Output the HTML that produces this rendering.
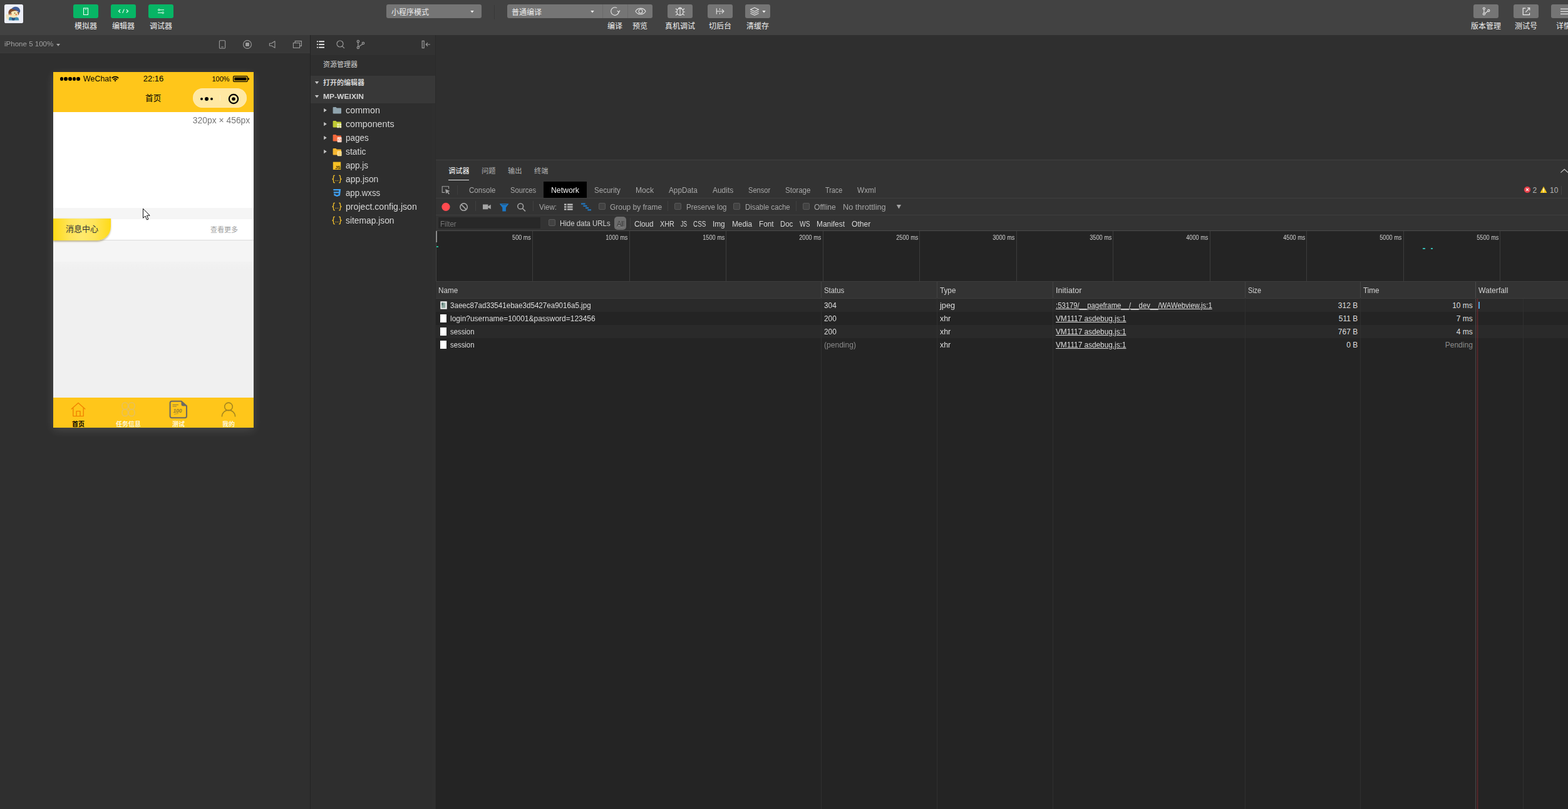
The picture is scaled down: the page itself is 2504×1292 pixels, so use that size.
<!DOCTYPE html>
<html><head><meta charset="utf-8"><title>WeChat DevTools</title><style>
html,body{margin:0;padding:0;}
body{width:2504px;height:1292px;overflow:hidden;background:#2e2e2e;font-family:"Liberation Sans",sans-serif;}
#r{position:relative;width:2504px;height:1292px;overflow:hidden;background:#2e2e2e;}
#r div,#r svg{position:absolute;display:block;}
#r .t{white-space:pre;}
#r u{text-decoration:underline;}
#r svg.cj text{font-family:"Liberation Sans","Noto Sans CJK SC",sans-serif;font-size:1000px;}
</style></head><body><div id="r">
<div style="left:0px;top:0px;width:2504px;height:56px;background:#424242;"></div>
<svg style="left:7px;top:7px;" width="30" height="30" viewBox="0 0 30 30">
<defs><clipPath id="av"><rect width="30" height="30" rx="2.6"/></clipPath>
<filter id="avb" x="-10%" y="-10%" width="120%" height="120%"><feGaussianBlur stdDeviation="0.45"/></filter></defs>
<g clip-path="url(#av)">
<rect x="-1" y="-1" width="32" height="32" fill="#eceef7"/>
<g filter="url(#avb)">
<path d="M7 20.8 C10 19.6 19 19.6 22.4 21.2 L23.4 25.4 H7.2Z" fill="#3f8fb0"/>
<path d="M11.5 20.4 L17.5 20.4 L16 25.4 H12.5Z" fill="#2b4f83"/>
<path d="M2.2 17.4 C2.6 15.4 5 14.8 6.4 16 C7.8 17.4 7.8 21.6 6.8 24.6 C4.6 24.8 2.4 21.6 2.2 17.4Z" fill="#f1e4bf"/>
<ellipse cx="14.8" cy="15.6" rx="7.2" ry="6" fill="#f6e6b6"/>
<path d="M6.6 14.6 C5.6 9 10.4 5.6 16.4 6.2 C19 7 20.6 9 21.4 11 C17.6 9.6 12.6 10.2 9.6 13.6 C8.6 14.8 8.2 16 7.8 17.4 C7.2 16.6 6.8 15.6 6.6 14.6Z" fill="#7f4a2c"/>
<path d="M20 12.4 C21.6 13.4 22.4 15.4 22 17.6 C23.6 15.8 24 13.6 23.4 12Z" fill="#8a5a30"/>
<path d="M11.6 7.4 C13.6 2.6 22.4 2.4 24.8 8.4 C25.6 10.6 25 12.6 23.8 13.6 C21.4 9.8 16.6 7.8 11.6 7.4Z" fill="#3f5b97"/>
<ellipse cx="10.2" cy="16" rx="1.5" ry="1.2" fill="#e2875c"/><ellipse cx="18.9" cy="16.2" rx="1.5" ry="1.2" fill="#e2875c"/>
<ellipse cx="10.3" cy="13.9" rx="0.8" ry="1" fill="#4a2c18"/><ellipse cx="16.6" cy="13.9" rx="0.8" ry="1" fill="#6b6a2a"/>
</g>
</g></svg>
<div style="left:117px;top:7px;width:40px;height:22px;background:#07b565;border-radius:3px;"></div>
<svg class="cj " width="36.00" height="12.00" viewBox="0 0 3000 1000" style="left:119.00px;top:35.12px;"><text x="0" y="880" fill="#f0f0f0">模拟器</text></svg>
<div style="left:177px;top:7px;width:40px;height:22px;background:#07b565;border-radius:3px;"></div>
<svg class="cj " width="36.00" height="12.00" viewBox="0 0 3000 1000" style="left:179.00px;top:35.12px;"><text x="0" y="880" fill="#f0f0f0">编辑器</text></svg>
<div style="left:237px;top:7px;width:40px;height:22px;background:#07b565;border-radius:3px;"></div>
<svg class="cj " width="36.00" height="12.00" viewBox="0 0 3000 1000" style="left:239.00px;top:35.12px;"><text x="0" y="880" fill="#f0f0f0">调试器</text></svg>
<svg style="left:117px;top:7px;" width="40" height="22" viewBox="0 0 40 22"><rect x="16.5" y="6" width="7" height="10.5" fill="none" stroke="#eafff3" stroke-width="1.1"/><line x1="18.6" y1="7.9" x2="21.4" y2="7.9" stroke="#eafff3" stroke-width="0.9"/></svg>
<svg style="left:177px;top:7px;" width="40" height="22" viewBox="0 0 40 22"><g fill="none" stroke="#eafff3" stroke-width="1.15"><path d="M15.2 8.2 L12.4 10.7 L15.2 13.2"/><path d="M24.8 8.2 L27.6 10.7 L24.8 13.2"/><path d="M21.3 7.6 L18.7 13.9"/></g></svg>
<svg style="left:237px;top:7px;" width="40" height="22" viewBox="0 0 40 22"><g fill="none" stroke="#eafff3" stroke-width="1"><circle cx="16.8" cy="8.8" r="1.3"/><line x1="18.2" y1="8.8" x2="25" y2="8.8"/><circle cx="23.2" cy="13.4" r="1.3"/><line x1="15" y1="13.4" x2="21.8" y2="13.4"/></g></svg>
<div style="left:617px;top:7px;width:152px;height:22px;background:#757575;border-radius:3px;"></div>
<svg class="cj " width="60.00" height="12.00" viewBox="0 0 5000 1000" style="left:624.72px;top:12.92px;"><text x="0" y="880" fill="#ececec">小程序模式</text></svg>
<svg style="left:750px;top:16px;" width="8" height="5" viewBox="0 0 8 5"><path d="M1.3 1 L6.7 1 L4 4.4Z" fill="#f0f0f0"/></svg>
<div style="left:789px;top:8px;width:1px;height:23px;background:#383838;"></div>
<div style="left:810px;top:7px;width:232px;height:22px;background:#757575;border-radius:3px;"></div>
<div style="left:962px;top:7px;width:1px;height:22px;background:#6a6a6a;"></div>
<div style="left:1002px;top:7px;width:1px;height:22px;background:#6a6a6a;"></div>
<svg class="cj " width="48.00" height="12.00" viewBox="0 0 4000 1000" style="left:816.82px;top:12.92px;"><text x="0" y="880" fill="#ececec">普通编译</text></svg>
<svg style="left:942px;top:16px;" width="8" height="5" viewBox="0 0 8 5"><path d="M1.3 1 L6.7 1 L4 4.4Z" fill="#f0f0f0"/></svg>
<svg style="left:972px;top:8px;" width="20" height="20" viewBox="0 0 20 20"><g fill="none" stroke="#e6e6e6" stroke-width="1.1"><path d="M13.2 4.6 A6.3 6.3 0 1 0 16.2 10.9"/><path d="M13.6 9.2 L16.2 11.4 L18 8.6"/></g></svg>
<svg style="left:1013px;top:8px;" width="20" height="20" viewBox="0 0 20 20"><g fill="none" stroke="#e6e6e6" stroke-width="1.05"><path d="M2 10 C5 3.8 15 3.8 18 10 C15 16.2 5 16.2 2 10Z"/><circle cx="10" cy="10" r="3"/></g></svg>
<svg class="cj " width="24.00" height="12.00" viewBox="0 0 2000 1000" style="left:970.00px;top:35.12px;"><text x="0" y="880" fill="#f0f0f0">编译</text></svg>
<svg class="cj " width="24.00" height="12.00" viewBox="0 0 2000 1000" style="left:1010.00px;top:35.12px;"><text x="0" y="880" fill="#f0f0f0">预览</text></svg>
<div style="left:1066px;top:7px;width:40px;height:22px;background:#757575;border-radius:3px;"></div>
<svg style="left:1076px;top:8px;" width="20" height="20" viewBox="0 0 20 20"><g fill="none" stroke="#e6e6e6" stroke-width="1.1"><path d="M5 10.4 A5 5 0 0 1 15 10.4 L15 11.4 A5 5 0 0 1 5 11.4Z"/><path d="M7.4 6 A2.7 2.7 0 0 1 12.6 6"/><line x1="10" y1="6" x2="10" y2="16.2"/><path d="M5 11 H2.2 M15 11 H17.8 M5.8 8 L3 5.8 M14.2 8 L17 5.8 M6 14.2 L3 16.4 M14 14.2 L17 16.4"/></g></svg>
<svg class="cj " width="48.00" height="12.00" viewBox="0 0 4000 1000" style="left:1062.00px;top:35.12px;"><text x="0" y="880" fill="#f0f0f0">真机调试</text></svg>
<div style="left:1130px;top:7px;width:40px;height:22px;background:#757575;border-radius:3px;"></div>
<svg style="left:1140px;top:8px;" width="20" height="20" viewBox="0 0 20 20"><g fill="none" stroke="#e6e6e6" stroke-width="1.1"><line x1="4.3" y1="5.2" x2="4.3" y2="14.8"/><path d="M4.3 10 H15.8"/><path d="M9.5 5.2 V7.8 M9.5 12.2 V14.8"/><path d="M12.6 6.6 L16 10 L12.6 13.4"/></g></svg>
<svg class="cj " width="36.00" height="12.00" viewBox="0 0 3000 1000" style="left:1132.00px;top:35.12px;"><text x="0" y="880" fill="#f0f0f0">切后台</text></svg>
<div style="left:1190px;top:7px;width:40px;height:22px;background:#757575;border-radius:3px;"></div>
<svg style="left:1195px;top:8px;" width="20" height="20" viewBox="0 0 20 20"><g fill="none" stroke="#e6e6e6" stroke-width="1.1" stroke-linejoin="round"><path d="M10 4.2 L16.6 7.2 L10 10.2 L3.4 7.2Z"/><path d="M3.4 10.2 L10 13.2 L16.6 10.2"/><path d="M3.4 13.2 L10 16.2 L16.6 13.2"/></g></svg>
<svg style="left:1216px;top:16px;" width="8" height="5" viewBox="0 0 8 5"><path d="M1.3 1 L6.7 1 L4 4.4Z" fill="#f0f0f0"/></svg>
<svg class="cj " width="36.00" height="12.00" viewBox="0 0 3000 1000" style="left:1192.00px;top:35.12px;"><text x="0" y="880" fill="#f0f0f0">清缓存</text></svg>
<div style="left:2353px;top:7px;width:40px;height:22px;background:#757575;border-radius:3px;"></div>
<svg style="left:2363px;top:8px;" width="20" height="20" viewBox="0 0 20 20"><g fill="none" stroke="#ececec" stroke-width="1.1"><circle cx="6.9" cy="5.6" r="1.6"/><circle cx="6.9" cy="14.4" r="1.6"/><circle cx="14.3" cy="9" r="1.6"/><line x1="6.9" y1="7.2" x2="6.9" y2="12.8"/><line x1="8.3" y1="13.5" x2="12.9" y2="9.9"/></g></svg>
<svg class="cj " width="48.00" height="12.00" viewBox="0 0 4000 1000" style="left:2349.00px;top:35.12px;"><text x="0" y="880" fill="#f0f0f0">版本管理</text></svg>
<div style="left:2417px;top:7px;width:40px;height:22px;background:#757575;border-radius:3px;"></div>
<svg style="left:2427px;top:8px;" width="20" height="20" viewBox="0 0 20 20"><g fill="none" stroke="#ececec" stroke-width="1.2"><path d="M9.4 5.2 H5.2 V15.6 H15.6 V12.6"/><path d="M12.2 4.6 H15.8 V8.4"/><line x1="15.6" y1="4.9" x2="9.4" y2="11.4"/></g></svg>
<svg class="cj " width="36.00" height="12.00" viewBox="0 0 3000 1000" style="left:2419.00px;top:35.12px;"><text x="0" y="880" fill="#f0f0f0">测试号</text></svg>
<div style="left:2477px;top:7px;width:40px;height:22px;background:#757575;border-radius:3px;"></div>
<svg style="left:2487px;top:8px;" width="20" height="20" viewBox="0 0 20 20"><g stroke="#ececec" stroke-width="1.2"><line x1="5" y1="6.3" x2="17" y2="6.3"/><line x1="5" y1="10.3" x2="17" y2="10.3"/><line x1="5" y1="14.3" x2="17" y2="14.3"/></g></svg>
<svg class="cj " width="24.00" height="12.00" viewBox="0 0 2000 1000" style="left:2485.00px;top:35.12px;"><text x="0" y="880" fill="#f0f0f0">详情</text></svg>
<div style="left:0px;top:56px;width:495px;height:1236px;background:#2f2f2f;"></div>
<div style="left:0px;top:56px;width:495px;height:29px;background:#383838;"></div>
<div style="left:0px;top:84px;width:495px;height:1px;background:#3c3c3c;"></div>
<div class="t" style="top:64.97px;font-size:11.5px;line-height:11.5px;color:#a0a0a0;left:7.4px;transform:scaleX(1.0036);transform-origin:0 0;">iPhone 5 100%</div>
<svg style="left:89px;top:69px;" width="8" height="6" viewBox="0 0 8 6"><path d="M1 1 L7 1 L4 4.8Z" fill="#a8a8a8"/></svg>
<svg style="left:348px;top:63px;" width="14" height="16" viewBox="0 0 14 16"><rect x="2.4" y="1.8" width="9.2" height="12.4" rx="1.2" fill="none" stroke="#9a9a9a" stroke-width="1.1"/><line x1="5.2" y1="12" x2="8.8" y2="12" stroke="#9a9a9a" stroke-width="1"/></svg>
<svg style="left:386px;top:62px;" width="18" height="18" viewBox="0 0 18 18"><circle cx="9" cy="9" r="6.4" fill="none" stroke="#9a9a9a" stroke-width="1.1"/><rect x="6" y="6" width="6" height="6" rx="1" fill="#9a9a9a"/></svg>
<svg style="left:427px;top:63px;" width="16" height="16" viewBox="0 0 16 16"><path d="M3.4 6.2 L6.6 6.2 L12 2.8 L12 13.4 L6.6 10 L3.4 10Z" fill="none" stroke="#9a9a9a" stroke-width="1.1" stroke-linejoin="round"/></svg>
<svg style="left:466px;top:63px;" width="18" height="16" viewBox="0 0 18 16"><g fill="none" stroke="#9a9a9a" stroke-width="1.1"><path d="M5.2 5.4 V2.6 H15.4 V10.4 H12.6"/><rect x="2.4" y="5.6" width="10.2" height="7.8"/></g></svg>
<div style="left:85px;top:115px;width:320px;height:568px;background:#f0f0f0;box-shadow:0 4px 14px rgba(255,255,255,0.13);"></div>
<div style="left:85px;top:115px;width:320px;height:64px;background:#ffc61a;"></div>
<div style="left:95.6px;top:123.1px;width:5.6px;height:5.6px;border-radius:50%;background:#000;"></div>
<div style="left:102.3px;top:123.1px;width:5.6px;height:5.6px;border-radius:50%;background:#000;"></div>
<div style="left:109.0px;top:123.1px;width:5.6px;height:5.6px;border-radius:50%;background:#000;"></div>
<div style="left:115.7px;top:123.1px;width:5.6px;height:5.6px;border-radius:50%;background:#000;"></div>
<div style="left:122.4px;top:123.1px;width:5.6px;height:5.6px;border-radius:50%;background:#000;"></div>
<div class="t" style="top:119.84px;font-size:12px;line-height:12px;color:#000;left:132.8px;transform:scaleX(1.0361);transform-origin:0 0;">WeChat</div>
<svg style="left:178.3px;top:121px;" width="12" height="10" viewBox="0 0 12 10"><g fill="none" stroke="#000" stroke-width="1.75"><path d="M0.8 3.9 A7.2 7.2 0 0 1 11.2 3.9"/><path d="M2.9 6.1 A4.3 4.3 0 0 1 9.1 6.1"/></g><path d="M4.4 7.6 A2.2 2.2 0 0 1 7.6 7.6 L6 9.4Z" fill="#000"/></svg>
<div class="t" style="top:119.00px;font-size:13px;line-height:13px;color:#000;left:245px;transform:translateX(-50%) ;transform-origin:0 0;">22:16</div>
<div class="t" style="top:120.69px;font-size:11px;line-height:11px;color:#000;left:338.4px;">100%</div>
<svg style="left:371px;top:120px;" width="28" height="12" viewBox="0 0 28 12"><rect x="1.6" y="1.7" width="22.6" height="8.6" rx="1.6" fill="none" stroke="#000" stroke-width="1.25"/><rect x="3.3" y="3.4" width="19.2" height="5.2" rx="0.5" fill="#000"/><path d="M25.2 4.1 A1.9 1.9 0 0 1 25.2 7.9Z" fill="#000"/></svg>
<svg class="cj " width="25.40" height="12.70" viewBox="0 0 2000 1000" style="left:232.30px;top:149.98px;"><text x="0" y="880" fill="#000">首页</text></svg>
<div style="left:308.3px;top:140.6px;width:85.6px;height:31.3px;border-radius:15.7px;background:rgba(255,255,255,0.6);box-shadow:inset 0 0 0 0.6px rgba(255,255,255,0.25);"></div>
<div style="left:319.8px;top:155.9px;width:4px;height:4px;border-radius:50%;background:#000;"></div>
<div style="left:326.6px;top:154.5px;width:6.8px;height:6.8px;border-radius:50%;background:#000;"></div>
<div style="left:336.2px;top:155.9px;width:4px;height:4px;border-radius:50%;background:#000;"></div>
<svg style="left:363.45px;top:147.5px;" width="20" height="20" viewBox="0 0 20 20"><circle cx="10" cy="10" r="7.15" fill="none" stroke="#000" stroke-width="2.2"/><circle cx="10" cy="10" r="2.8" fill="#000"/></svg>
<div style="left:351px;top:152.4px;width:0.7px;height:8.4px;background:rgba(255,255,255,0.35);"></div>
<div style="left:85px;top:179px;width:320px;height:153px;background:#fff;"></div>
<div class="t" style="top:184.65px;font-size:14px;line-height:14px;color:#777;right:2104.80px;transform:scaleX(0.9908);transform-origin:100% 0;">320px × 456px</div>
<div style="left:85px;top:332px;width:320px;height:17.5px;background:#f5f5f5;"></div>
<div style="left:85px;top:349.5px;width:320px;height:33.5px;background:#fff;box-shadow:0 1px 2px rgba(0,0,0,0.12);"></div>
<div style="left:85px;top:384px;width:320px;height:34px;background:#f5f5f5;"></div>
<div style="left:85px;top:418px;width:320px;height:217px;background:linear-gradient(#f2f2f2,#f0f0f0 12px);"></div>
<div style="left:85px;top:349px;width:92px;height:34.5px;border-radius:0 0 22px 0;background:linear-gradient(90deg,#ffda16,#ffe458 28%,#ffe96c 50%,#ffe458 72%,#ffda16);box-shadow:0 1.5px 2.5px rgba(110,85,0,0.4);"></div>
<svg class="cj " width="52.00" height="13.00" viewBox="0 0 4000 1000" style="left:105.00px;top:358.83px;"><text x="0" y="880" fill="#333">消息中心</text></svg>
<svg class="cj " width="44.00" height="11.00" viewBox="0 0 4000 1000" style="left:335.70px;top:360.91px;"><text x="0" y="880" fill="#a2a2a2">查看更多</text></svg>
<svg style="left:227px;top:332px;" width="14" height="21" viewBox="0 0 14 21"><path d="M1.5 1.2 L1.5 16.2 L5 13 L7.6 19 L10 18 L7.4 12.2 L12.2 12.2Z" fill="#fff" stroke="#111" stroke-width="1" stroke-linejoin="round"/></svg>
<div style="left:85px;top:635px;width:320px;height:48px;background:#ffc61a;"></div>
<svg style="left:112px;top:641px;" width="26" height="25" viewBox="0 0 26 25"><g fill="none" stroke="#f08200" stroke-width="1.4" stroke-linejoin="round"><path d="M1.8 12.4 L13 2.4 L24.2 12.4"/><path d="M4.8 10.6 V23.6 H21.2 V10.6"/><path d="M10 23.6 V15.6 H16 V23.6"/></g></svg>
<svg class="cj " width="20.00" height="10.00" viewBox="0 0 2000 1000" style="left:115.00px;top:671.70px;"><text x="0" y="880" fill="#000" font-weight="bold">首页</text></svg>
<svg style="left:192px;top:641px;" width="26" height="25" viewBox="0 0 26 25"><g fill="none" stroke="#e6c060" stroke-width="1.5"><rect x="3" y="2" width="9.4" height="10.6" rx="4.4"/><rect x="13.6" y="2" width="9.4" height="10.6" rx="4.4"/><rect x="3" y="12.8" width="9.4" height="10.6" rx="4.4"/><rect x="13.6" y="12.8" width="9.4" height="10.6" rx="4.4"/></g></svg>
<svg class="cj " width="40.00" height="10.00" viewBox="0 0 4000 1000" style="left:185.00px;top:671.70px;"><text x="0" y="880" fill="#fff6dc" font-weight="bold">任务信息</text></svg>
<svg style="left:270px;top:639px;" width="30" height="30" viewBox="0 0 30 30"><g fill="none" stroke="#6e6a62" stroke-width="2.1" stroke-linejoin="round"><path d="M4.2 1.8 H19.5 L28 9.4 V25.6 A2.6 2.6 0 0 1 25.4 28.2 H4.2 A2.6 2.6 0 0 1 1.6 25.6 V4.4 A2.6 2.6 0 0 1 4.2 1.8Z"/></g><path d="M19.5 1.8 L28 9.4 H22 A2.5 2.5 0 0 1 19.5 7Z" fill="#6e6a62"/><g stroke="#8f7a3a" stroke-width="1"><line x1="5.5" y1="7.5" x2="15" y2="7.5"/><line x1="5.5" y1="10" x2="12" y2="10"/></g><text x="6.4" y="19.6" font-family="Liberation Sans" font-size="8.5" font-style="italic" font-weight="bold" fill="#97802f">100</text><line x1="8" y1="22.4" x2="15" y2="21.4" stroke="#a08838" stroke-width="0.8"/></svg>
<svg class="cj " width="20.00" height="10.00" viewBox="0 0 2000 1000" style="left:275.00px;top:671.70px;"><text x="0" y="880" fill="#fff6dc" font-weight="bold">测试</text></svg>
<svg style="left:352px;top:641px;" width="26" height="26" viewBox="0 0 26 26"><g fill="none" stroke="#a5861f" stroke-width="1.6"><circle cx="13" cy="8.4" r="6.3"/><path d="M2.4 24.4 A10.6 10.4 0 0 1 23.6 24.4"/></g></svg>
<svg class="cj " width="20.00" height="10.00" viewBox="0 0 2000 1000" style="left:355.00px;top:671.70px;"><text x="0" y="880" fill="#fff6dc" font-weight="bold">我的</text></svg>
<div style="left:495px;top:56px;width:1px;height:1236px;background:#242424;"></div>
<div style="left:496px;top:56px;width:199px;height:1236px;background:#2e2e2e;"></div>
<div style="left:496px;top:56px;width:199px;height:32px;background:#323232;"></div>
<svg style="left:505px;top:64px;" width="14" height="14" viewBox="0 0 14 14"><g fill="#f2f2f2"><rect x="1" y="1.4" width="1.8" height="1.8"/><rect x="4.2" y="1.4" width="8.8" height="1.8"/><rect x="1" y="6.1" width="1.8" height="1.8"/><rect x="4.2" y="6.1" width="8.8" height="1.8"/><rect x="1" y="10.8" width="1.8" height="1.8"/><rect x="4.2" y="10.8" width="8.8" height="1.8"/></g></svg>
<svg style="left:536px;top:63px;" width="16" height="16" viewBox="0 0 16 16"><g fill="none" stroke="#9a9a9a" stroke-width="1.2"><circle cx="7" cy="7" r="5"/><line x1="10.6" y1="10.8" x2="14" y2="14.2"/></g></svg>
<svg style="left:568px;top:63px;" width="16" height="16" viewBox="0 0 16 16"><g fill="none" stroke="#9a9a9a" stroke-width="1.2"><circle cx="3.9" cy="3" r="1.7"/><circle cx="3.9" cy="13" r="1.7"/><circle cx="12" cy="6" r="1.7"/><line x1="3.9" y1="4.7" x2="3.9" y2="11.3"/><line x1="4.9" y1="11.6" x2="11" y2="7.4"/></g></svg>
<svg style="left:672px;top:64px;" width="16" height="14" viewBox="0 0 16 14"><g fill="none" stroke="#9a9a9a" stroke-width="1.2"><rect x="2.2" y="1.4" width="3" height="11.2"/><path d="M15 7 H8.4 M11 4.2 L8.2 7 L11 9.8"/></g></svg>
<svg class="cj " width="55.00" height="11.00" viewBox="0 0 5000 1000" style="left:516.06px;top:96.71px;"><text x="0" y="880" fill="#cfcfcf">资源管理器</text></svg>
<div style="left:496px;top:120.5px;width:199px;height:44.5px;background:#383838;"></div>
<svg style="left:502px;top:129px;" width="8" height="6" viewBox="0 0 8 6"><path d="M0.8 1 L7.2 1 L4 5.2Z" fill="#c5c5c5"/></svg>
<svg class="cj " width="66.00" height="11.00" viewBox="0 0 6000 1000" style="left:516.26px;top:126.11px;"><text x="0" y="880" fill="#d4d4d4" font-weight="bold">打开的编辑器</text></svg>
<svg style="left:502px;top:151px;" width="8" height="6" viewBox="0 0 8 6"><path d="M0.8 1 L7.2 1 L4 5.2Z" fill="#c5c5c5"/></svg>
<div class="t" style="top:148.69px;font-size:11px;line-height:11px;color:#d4d4d4;font-weight:bold;left:516.4px;transform:scaleX(1.0965);transform-origin:0 0;">MP-WEIXIN</div>
<svg style="left:516px;top:172px;" width="7" height="8" viewBox="0 0 7 8"><path d="M1.2 1 L5.8 4.1 L1.2 7.2Z" fill="#c5c5c5"/></svg>
<div class="t" style="top:168.65px;font-size:14px;line-height:14px;color:#d6d6d6;left:552.3px;transform:scaleX(1.0244);transform-origin:0 0;">common</div>
<svg style="left:516px;top:194px;" width="7" height="8" viewBox="0 0 7 8"><path d="M1.2 1 L5.8 4.1 L1.2 7.2Z" fill="#c5c5c5"/></svg>
<div class="t" style="top:190.65px;font-size:14px;line-height:14px;color:#d6d6d6;left:552.3px;transform:scaleX(1.0160);transform-origin:0 0;">components</div>
<svg style="left:516px;top:216px;" width="7" height="8" viewBox="0 0 7 8"><path d="M1.2 1 L5.8 4.1 L1.2 7.2Z" fill="#c5c5c5"/></svg>
<div class="t" style="top:212.65px;font-size:14px;line-height:14px;color:#d6d6d6;left:552.3px;transform:scaleX(0.9618);transform-origin:0 0;">pages</div>
<svg style="left:516px;top:238px;" width="7" height="8" viewBox="0 0 7 8"><path d="M1.2 1 L5.8 4.1 L1.2 7.2Z" fill="#c5c5c5"/></svg>
<div class="t" style="top:234.65px;font-size:14px;line-height:14px;color:#d6d6d6;left:552.3px;transform:scaleX(0.9943);transform-origin:0 0;">static</div>
<div class="t" style="top:256.65px;font-size:14px;line-height:14px;color:#d6d6d6;left:552.3px;transform:scaleX(0.9636);transform-origin:0 0;">app.js</div>
<div class="t" style="top:278.65px;font-size:14px;line-height:14px;color:#d6d6d6;left:552.3px;transform:scaleX(0.9880);transform-origin:0 0;">app.json</div>
<div class="t" style="top:300.65px;font-size:14px;line-height:14px;color:#d6d6d6;left:552.3px;transform:scaleX(0.9441);transform-origin:0 0;">app.wxss</div>
<div class="t" style="top:322.65px;font-size:14px;line-height:14px;color:#d6d6d6;left:552.3px;transform:scaleX(1.0085);transform-origin:0 0;">project.config.json</div>
<div class="t" style="top:344.65px;font-size:14px;line-height:14px;color:#d6d6d6;left:552.3px;transform:scaleX(0.9861);transform-origin:0 0;">sitemap.json</div>
<svg style="left:530.6px;top:170px;" width="16" height="14" viewBox="0 0 16 14"><path d="M0.6 2 A1 1 0 0 1 1.6 1 H5.4 L6.8 2.6 H13 A1 1 0 0 1 14 3.6 V10.6 A1 1 0 0 1 13 11.6 H1.6 A1 1 0 0 1 0.6 10.6Z" fill="#90a4ae"/></svg>
<svg style="left:530.6px;top:192px;" width="16" height="14" viewBox="0 0 16 14"><path d="M0.6 2 A1 1 0 0 1 1.6 1 H5.4 L6.8 2.6 H13 A1 1 0 0 1 14 3.6 V10.6 A1 1 0 0 1 13 11.6 H1.6 A1 1 0 0 1 0.6 10.6Z" fill="#c0ca33"/><g fill="#eef3c0"><rect x="7.4" y="5.4" width="3" height="3"/><rect x="11.2" y="5.4" width="3" height="3"/><rect x="7.4" y="9.2" width="3" height="3"/><rect x="11.2" y="9.2" width="3" height="3"/></g></svg>
<svg style="left:530.6px;top:214px;" width="16" height="14" viewBox="0 0 16 14"><path d="M0.6 2 A1 1 0 0 1 1.6 1 H5.4 L6.8 2.6 H13 A1 1 0 0 1 14 3.6 V10.6 A1 1 0 0 1 13 11.6 H1.6 A1 1 0 0 1 0.6 10.6Z" fill="#f4683c"/><rect x="7.6" y="5" width="7" height="8.2" rx="1" fill="#ffd9cc"/><path d="M10 7.8 L8.8 9.1 L10 10.4 M12.2 7.8 L13.4 9.1 L12.2 10.4" stroke="#f4683c" stroke-width="0.8" fill="none"/></svg>
<svg style="left:530.6px;top:236px;" width="16" height="14" viewBox="0 0 16 14"><path d="M0.6 2 A1 1 0 0 1 1.6 1 H5.4 L6.8 2.6 H13 A1 1 0 0 1 14 3.6 V10.6 A1 1 0 0 1 13 11.6 H1.6 A1 1 0 0 1 0.6 10.6Z" fill="#f7b731"/><rect x="7.6" y="5.4" width="7" height="7.8" rx="1" fill="#ffe9a8"/><path d="M9 7.6 H13.4 M9 9.4 H13.4 M9 11.2 H13.4" stroke="#f7b731" stroke-width="0.8"/></svg>
<svg style="left:531px;top:257.5px;" width="14" height="14" viewBox="0 0 14 14"><rect x="0.8" y="0.6" width="12.4" height="12.4" fill="#f6c025"/><text x="4.2" y="11.6" font-family="Liberation Sans" font-size="7" font-weight="bold" fill="#3a2c00">JS</text></svg>
<svg style="left:529px;top:279px;" width="18" height="14" viewBox="0 0 18 14"><g fill="none" stroke="#e8b82c" stroke-width="1.4" stroke-linecap="round"><path d="M5.2 1.2 C3.4 1.2 3.6 2.4 3.6 4.2 C3.6 6 3.2 6.9 1.6 7 C3.2 7.1 3.6 8 3.6 9.8 C3.6 11.6 3.4 12.8 5.2 12.8"/><path d="M12.8 1.2 C14.6 1.2 14.4 2.4 14.4 4.2 C14.4 6 14.8 6.9 16.4 7 C14.8 7.1 14.4 8 14.4 9.8 C14.4 11.6 14.6 12.8 12.8 12.8"/></g><circle cx="7.5" cy="9.6" r="0.75" fill="#e8b82c"/><circle cx="10.5" cy="9.6" r="0.75" fill="#e8b82c"/></svg>
<svg style="left:531px;top:301px;" width="14" height="14" viewBox="0 0 14 14"><path d="M1.2 1 H13.2 L12 11.2 L7.2 13 L2.4 11.2 L2.1 8.6 H4.6 L4.8 9.6 L7.2 10.5 L9.6 9.6 L9.9 7.4 H1.9 L1.7 5.2 H10.1 L10.3 3.2 H1.4Z" fill="#3f9ff0"/></svg>
<svg style="left:529px;top:323px;" width="18" height="14" viewBox="0 0 18 14"><g fill="none" stroke="#e8b82c" stroke-width="1.4" stroke-linecap="round"><path d="M5.2 1.2 C3.4 1.2 3.6 2.4 3.6 4.2 C3.6 6 3.2 6.9 1.6 7 C3.2 7.1 3.6 8 3.6 9.8 C3.6 11.6 3.4 12.8 5.2 12.8"/><path d="M12.8 1.2 C14.6 1.2 14.4 2.4 14.4 4.2 C14.4 6 14.8 6.9 16.4 7 C14.8 7.1 14.4 8 14.4 9.8 C14.4 11.6 14.6 12.8 12.8 12.8"/></g><circle cx="7.5" cy="9.6" r="0.75" fill="#e8b82c"/><circle cx="10.5" cy="9.6" r="0.75" fill="#e8b82c"/></svg>
<svg style="left:529px;top:345px;" width="18" height="14" viewBox="0 0 18 14"><g fill="none" stroke="#e8b82c" stroke-width="1.4" stroke-linecap="round"><path d="M5.2 1.2 C3.4 1.2 3.6 2.4 3.6 4.2 C3.6 6 3.2 6.9 1.6 7 C3.2 7.1 3.6 8 3.6 9.8 C3.6 11.6 3.4 12.8 5.2 12.8"/><path d="M12.8 1.2 C14.6 1.2 14.4 2.4 14.4 4.2 C14.4 6 14.8 6.9 16.4 7 C14.8 7.1 14.4 8 14.4 9.8 C14.4 11.6 14.6 12.8 12.8 12.8"/></g><circle cx="7.5" cy="9.6" r="0.75" fill="#e8b82c"/><circle cx="10.5" cy="9.6" r="0.75" fill="#e8b82c"/></svg>
<div style="left:691px;top:166px;width:1px;height:1126px;background:#313131;"></div>
<div style="left:694px;top:166px;width:1px;height:1126px;background:#313131;"></div>
<div style="left:695px;top:56px;width:1px;height:199px;background:#2a2a2a;"></div>
<div style="left:695px;top:255px;width:1px;height:1037px;background:#2a2a2a;"></div>
<div style="left:696px;top:56px;width:1808px;height:199px;background:#2f2f2f;"></div>
<div style="left:696px;top:255px;width:1808px;height:1037px;background:#242424;"></div>
<div style="left:696px;top:255px;width:1808px;height:113px;background:#333333;"></div>
<div style="left:696px;top:255px;width:1808px;height:1px;background:#414141;"></div>
<svg class="cj " width="33.90" height="11.30" viewBox="0 0 3000 1000" style="left:715.55px;top:267.16px;"><text x="0" y="880" fill="#ffffff">调试器</text></svg>
<div style="left:716px;top:286.6px;width:33.4px;height:1.2px;background:#e8e8e8;"></div>
<svg class="cj " width="22.60" height="11.30" viewBox="0 0 2000 1000" style="left:768.55px;top:267.16px;"><text x="0" y="880" fill="#b0b0b0">问题</text></svg>
<svg class="cj " width="22.60" height="11.30" viewBox="0 0 2000 1000" style="left:810.55px;top:267.16px;"><text x="0" y="880" fill="#b0b0b0">输出</text></svg>
<svg class="cj " width="22.60" height="11.30" viewBox="0 0 2000 1000" style="left:852.55px;top:267.16px;"><text x="0" y="880" fill="#b0b0b0">终端</text></svg>
<svg style="left:2490px;top:266px;" width="16" height="12" viewBox="0 0 16 12"><path d="M2.4 9.6 L8.2 4.4 L14 9.6" fill="none" stroke="#c8c8c8" stroke-width="1.2"/></svg>
<div style="left:696px;top:316px;width:1808px;height:1px;background:#3f3f3f;"></div>
<div style="left:696px;top:343px;width:1808px;height:1px;background:#3f3f3f;"></div>
<div style="left:696px;top:368px;width:1808px;height:1px;background:#4a4a4a;"></div>
<svg style="left:704px;top:296px;" width="17" height="16" viewBox="0 0 17 16"><g fill="none" stroke="#a0a0a0" stroke-width="1.1"><path d="M6.4 11.4 H2.2 V1.8 H12.6 V5.4"/></g><path d="M7.2 6 L14.6 9 L11.6 10.2 L14 13.4 L12.6 14.4 L10.2 11.2 L8.2 13.4Z" fill="#a0a0a0"/></svg>
<div style="left:730px;top:296px;width:1px;height:15px;background:#3f3f3f;"></div>
<div style="left:868px;top:290px;width:69px;height:26px;background:#000;"></div>
<div class="t" style="top:298.14px;font-size:12px;line-height:12px;color:#a8a8a8;left:748.8px;transform:scaleX(0.9630);transform-origin:0 0;">Console</div>
<div class="t" style="top:298.14px;font-size:12px;line-height:12px;color:#a8a8a8;left:814.8px;transform:scaleX(0.9334);transform-origin:0 0;">Sources</div>
<div class="t" style="top:298.14px;font-size:12px;line-height:12px;color:#f0f0f0;left:879.8px;transform:scaleX(1.0201);transform-origin:0 0;">Network</div>
<div class="t" style="top:298.14px;font-size:12px;line-height:12px;color:#a8a8a8;left:948.7px;transform:scaleX(0.9640);transform-origin:0 0;">Security</div>
<div class="t" style="top:298.14px;font-size:12px;line-height:12px;color:#a8a8a8;left:1015px;transform:scaleX(1.0114);transform-origin:0 0;">Mock</div>
<div class="t" style="top:298.14px;font-size:12px;line-height:12px;color:#a8a8a8;left:1068px;transform:scaleX(0.9828);transform-origin:0 0;">AppData</div>
<div class="t" style="top:298.14px;font-size:12px;line-height:12px;color:#a8a8a8;left:1137.8px;transform:scaleX(0.9952);transform-origin:0 0;">Audits</div>
<div class="t" style="top:298.14px;font-size:12px;line-height:12px;color:#a8a8a8;left:1194.7px;transform:scaleX(0.9229);transform-origin:0 0;">Sensor</div>
<div class="t" style="top:298.14px;font-size:12px;line-height:12px;color:#a8a8a8;left:1253.6px;transform:scaleX(0.9612);transform-origin:0 0;">Storage</div>
<div class="t" style="top:298.14px;font-size:12px;line-height:12px;color:#a8a8a8;left:1318px;transform:scaleX(0.8996);transform-origin:0 0;">Trace</div>
<div class="t" style="top:298.14px;font-size:12px;line-height:12px;color:#a8a8a8;left:1369.1px;transform:scaleX(0.9867);transform-origin:0 0;">Wxml</div>
<svg style="left:2433px;top:297px;" width="12" height="12" viewBox="0 0 12 12"><circle cx="6" cy="5.9" r="5.2" fill="#e5414a"/><path d="M4 3.9 L8 7.9 M8 3.9 L4 7.9" stroke="#fff" stroke-width="1.3"/></svg>
<div class="t" style="top:298.04px;font-size:12px;line-height:12px;color:#b4b4b4;left:2447.6px;">2</div>
<svg style="left:2459px;top:297px;" width="12" height="12" viewBox="0 0 12 12"><path d="M6 0.8 L11.4 11 H0.6Z" fill="#f5c518"/><rect x="5.3" y="4" width="1.4" height="4" fill="#fff"/><rect x="5.3" y="8.8" width="1.4" height="1.4" fill="#fff"/></svg>
<div class="t" style="top:298.04px;font-size:12px;line-height:12px;color:#b4b4b4;left:2475px;">10</div>
<div style="left:2493px;top:297px;width:1px;height:14px;background:#444;"></div>
<svg style="left:704px;top:322px;" width="16" height="16" viewBox="0 0 16 16"><circle cx="8" cy="8.3" r="6.6" fill="#ff4a4f"/></svg>
<svg style="left:733px;top:323px;" width="16" height="16" viewBox="0 0 16 16"><g fill="none" stroke="#a4a4a4" stroke-width="1.6"><circle cx="7.6" cy="7.6" r="5.7"/><line x1="3.6" y1="3.6" x2="11.6" y2="11.6"/></g></svg>
<div style="left:759px;top:321px;width:1px;height:16px;background:#404040;"></div>
<svg style="left:770px;top:324px;" width="16" height="12" viewBox="0 0 16 12"><path d="M1 2.6 H9.4 V10.2 H1Z M9.4 5.4 L13.8 2.8 V10 L9.4 7.4Z" fill="#a4a4a4"/></svg>
<svg style="left:797px;top:324px;" width="16" height="15" viewBox="0 0 16 15"><path d="M0.8 1.6 C4 0.8 12.2 0.8 15.4 1.6 L10.9 7.4 V13.6 H5.3 V7.4Z" fill="#1c78c6"/><ellipse cx="8.1" cy="2.5" rx="4.4" ry="0.7" fill="#2c4a66"/></svg>
<svg style="left:825px;top:323px;" width="16" height="16" viewBox="0 0 16 16"><g fill="none" stroke="#a4a4a4" stroke-width="1.6"><circle cx="6.2" cy="6.4" r="4.4"/><line x1="9.4" y1="9.8" x2="14" y2="14.4"/></g></svg>
<div style="left:851px;top:321px;width:1px;height:16px;background:#404040;"></div>
<div class="t" style="top:325.04px;font-size:12px;line-height:12px;color:#a6a6a6;left:861px;transform:scaleX(0.9609);transform-origin:0 0;">View:</div>
<svg style="left:900px;top:324px;" width="16" height="12" viewBox="0 0 16 12"><g fill="#b4b4b4"><rect x="1" y="1.4" width="3.6" height="2.6"/><rect x="6" y="1.4" width="8.6" height="2.6"/><rect x="1" y="5.2" width="3.6" height="2.6"/><rect x="6" y="5.2" width="8.6" height="2.6"/><rect x="1" y="9" width="3.6" height="2.6"/><rect x="6" y="9" width="8.6" height="2.6"/></g></svg>
<svg style="left:927px;top:323px;" width="18" height="14" viewBox="0 0 18 14"><g fill="#2277c0"><rect x="1" y="1.4" width="6.6" height="2.2"/><rect x="4.4" y="4.8" width="6" height="2.2"/><rect x="8" y="8" width="5" height="2.2"/><rect x="11.4" y="11.2" width="5.6" height="2.2"/></g></svg>
<div style="left:956px;top:324.3px;width:9px;height:9px;border:1px solid #595959;border-radius:2px;background:#424242;"></div>
<div class="t" style="top:325.04px;font-size:12px;line-height:12px;color:#a6a6a6;left:974.2px;transform:scaleX(0.9967);transform-origin:0 0;">Group by frame</div>
<div style="left:1066px;top:321px;width:1px;height:16px;background:#404040;"></div>
<div style="left:1077px;top:324.3px;width:9px;height:9px;border:1px solid #595959;border-radius:2px;background:#424242;"></div>
<div class="t" style="top:325.04px;font-size:12px;line-height:12px;color:#a6a6a6;left:1095.5px;transform:scaleX(0.9558);transform-origin:0 0;">Preserve log</div>
<div style="left:1171px;top:324.3px;width:9px;height:9px;border:1px solid #595959;border-radius:2px;background:#424242;"></div>
<div class="t" style="top:325.04px;font-size:12px;line-height:12px;color:#a6a6a6;left:1189.9px;transform:scaleX(0.9512);transform-origin:0 0;">Disable cache</div>
<div style="left:1271px;top:321px;width:1px;height:16px;background:#404040;"></div>
<div style="left:1282px;top:324.3px;width:9px;height:9px;border:1px solid #595959;border-radius:2px;background:#424242;"></div>
<div class="t" style="top:325.04px;font-size:12px;line-height:12px;color:#a6a6a6;left:1300px;transform:scaleX(1.0096);transform-origin:0 0;">Offline</div>
<div class="t" style="top:325.04px;font-size:12px;line-height:12px;color:#a6a6a6;left:1345.5px;transform:scaleX(1.0618);transform-origin:0 0;">No throttling</div>
<svg style="left:1431px;top:326px;" width="9" height="8" viewBox="0 0 9 8"><path d="M0.8 1 L8 1 L4.4 7.4Z" fill="#a4a4a4"/></svg>
<div style="left:700px;top:347px;width:163px;height:18px;background:#282828;"></div>
<div class="t" style="top:351.64px;font-size:12px;line-height:12px;color:#767676;left:703.3px;transform:scaleX(0.9636);transform-origin:0 0;">Filter</div>
<div style="left:876px;top:350.3px;width:9px;height:9px;border:1px solid #595959;border-radius:2px;background:#424242;"></div>
<div class="t" style="top:351.04px;font-size:12px;line-height:12px;color:#d0d0d0;left:894.2px;transform:scaleX(0.9526);transform-origin:0 0;">Hide data URLs</div>
<div style="left:981px;top:346.4px;width:19px;height:21px;border-radius:5px;background:#6d6d6d;"></div>
<div class="t" style="top:351.64px;font-size:12px;line-height:12px;color:#2c2c2c;text-shadow:0 1px 0 rgba(255,255,255,0.35);left:984.8px;transform:scaleX(0.9143);transform-origin:0 0;">All</div>
<div style="left:1005.5px;top:348px;width:1px;height:17px;background:#3f3f3f;"></div>
<div class="t" style="top:351.64px;font-size:12px;line-height:12px;color:#d8d8d8;left:1012.6px;transform:scaleX(0.9758);transform-origin:0 0;">Cloud</div>
<div class="t" style="top:351.64px;font-size:12px;line-height:12px;color:#d8d8d8;left:1054px;transform:scaleX(0.8996);transform-origin:0 0;">XHR</div>
<div class="t" style="top:351.64px;font-size:12px;line-height:12px;color:#d8d8d8;left:1086.7px;transform:scaleX(0.7206);transform-origin:0 0;">JS</div>
<div class="t" style="top:351.64px;font-size:12px;line-height:12px;color:#d8d8d8;left:1106.8px;transform:scaleX(0.8223);transform-origin:0 0;">CSS</div>
<div class="t" style="top:351.64px;font-size:12px;line-height:12px;color:#d8d8d8;left:1137.8px;transform:scaleX(0.9842);transform-origin:0 0;">Img</div>
<div class="t" style="top:351.64px;font-size:12px;line-height:12px;color:#d8d8d8;left:1168.7px;transform:scaleX(0.9851);transform-origin:0 0;">Media</div>
<div class="t" style="top:351.64px;font-size:12px;line-height:12px;color:#d8d8d8;left:1211.5px;transform:scaleX(0.9785);transform-origin:0 0;">Font</div>
<div class="t" style="top:351.64px;font-size:12px;line-height:12px;color:#d8d8d8;left:1245.7px;transform:scaleX(0.9417);transform-origin:0 0;">Doc</div>
<div class="t" style="top:351.64px;font-size:12px;line-height:12px;color:#d8d8d8;left:1276.5px;transform:scaleX(0.8530);transform-origin:0 0;">WS</div>
<div class="t" style="top:351.64px;font-size:12px;line-height:12px;color:#d8d8d8;left:1304px;transform:scaleX(0.9921);transform-origin:0 0;">Manifest</div>
<div class="t" style="top:351.64px;font-size:12px;line-height:12px;color:#d8d8d8;left:1359.6px;transform:scaleX(1.0128);transform-origin:0 0;">Other</div>
<div style="left:850px;top:369px;width:1px;height:80px;background:#3c3c3c;"></div>
<div class="t" style="top:374.94px;font-size:10px;line-height:10px;color:#d0d0d0;right:1656.10px;transform:scaleX(0.9056);transform-origin:100% 0;">500 ms</div>
<div style="left:1005px;top:369px;width:1px;height:80px;background:#3c3c3c;"></div>
<div class="t" style="top:374.94px;font-size:10px;line-height:10px;color:#d0d0d0;right:1501.60px;transform:scaleX(0.9150);transform-origin:100% 0;">1000 ms</div>
<div style="left:1159px;top:369px;width:1px;height:80px;background:#3c3c3c;"></div>
<div class="t" style="top:374.94px;font-size:10px;line-height:10px;color:#d0d0d0;right:1347.10px;transform:scaleX(0.9150);transform-origin:100% 0;">1500 ms</div>
<div style="left:1314px;top:369px;width:1px;height:80px;background:#3c3c3c;"></div>
<div class="t" style="top:374.94px;font-size:10px;line-height:10px;color:#d0d0d0;right:1192.60px;transform:scaleX(0.9150);transform-origin:100% 0;">2000 ms</div>
<div style="left:1468px;top:369px;width:1px;height:80px;background:#3c3c3c;"></div>
<div class="t" style="top:374.94px;font-size:10px;line-height:10px;color:#d0d0d0;right:1038.10px;transform:scaleX(0.9150);transform-origin:100% 0;">2500 ms</div>
<div style="left:1623px;top:369px;width:1px;height:80px;background:#3c3c3c;"></div>
<div class="t" style="top:374.94px;font-size:10px;line-height:10px;color:#d0d0d0;right:883.60px;transform:scaleX(0.9150);transform-origin:100% 0;">3000 ms</div>
<div style="left:1777px;top:369px;width:1px;height:80px;background:#3c3c3c;"></div>
<div class="t" style="top:374.94px;font-size:10px;line-height:10px;color:#d0d0d0;right:729.10px;transform:scaleX(0.9150);transform-origin:100% 0;">3500 ms</div>
<div style="left:1932px;top:369px;width:1px;height:80px;background:#3c3c3c;"></div>
<div class="t" style="top:374.94px;font-size:10px;line-height:10px;color:#d0d0d0;right:574.60px;transform:scaleX(0.9150);transform-origin:100% 0;">4000 ms</div>
<div style="left:2086px;top:369px;width:1px;height:80px;background:#3c3c3c;"></div>
<div class="t" style="top:374.94px;font-size:10px;line-height:10px;color:#d0d0d0;right:420.10px;transform:scaleX(0.9150);transform-origin:100% 0;">4500 ms</div>
<div style="left:2241px;top:369px;width:1px;height:80px;background:#3c3c3c;"></div>
<div class="t" style="top:374.94px;font-size:10px;line-height:10px;color:#d0d0d0;right:265.60px;transform:scaleX(0.9150);transform-origin:100% 0;">5000 ms</div>
<div style="left:2395px;top:369px;width:1px;height:80px;background:#3c3c3c;"></div>
<div class="t" style="top:374.94px;font-size:10px;line-height:10px;color:#d0d0d0;right:111.10px;transform:scaleX(0.9150);transform-origin:100% 0;">5500 ms</div>
<div style="left:696px;top:369px;width:1px;height:80px;background:#444444;"></div>
<div style="left:696.3px;top:369px;width:1.7px;height:18px;background:#8c8c8c;"></div>
<div style="left:696.5px;top:393px;width:3.5px;height:1.7px;background:#22b490;"></div>
<div style="left:2272px;top:396px;width:4px;height:1.6px;background:#35b8b0;"></div>
<div style="left:2285px;top:396px;width:3px;height:1.6px;background:#35b8b0;"></div>
<div style="left:696px;top:449px;width:1808px;height:28px;background:#333333;"></div>
<div style="left:696px;top:449px;width:1808px;height:1px;background:#3d3d3d;"></div>
<div style="left:696px;top:476px;width:1808px;height:1px;background:#3d3d3d;"></div>
<div style="left:696px;top:477px;width:1808px;height:21px;background:#2a2a2a;"></div>
<div style="left:696px;top:498px;width:1808px;height:21px;background:#242424;"></div>
<div style="left:696px;top:519px;width:1808px;height:21px;background:#2a2a2a;"></div>
<div style="left:696px;top:540px;width:1808px;height:21px;background:#242424;"></div>
<div style="left:1311px;top:450px;width:1px;height:842px;background:#303030;"></div>
<div style="left:1311px;top:450px;width:1px;height:26px;background:#434343;"></div>
<div style="left:1496px;top:450px;width:1px;height:842px;background:#303030;"></div>
<div style="left:1496px;top:450px;width:1px;height:26px;background:#434343;"></div>
<div style="left:1681px;top:450px;width:1px;height:842px;background:#303030;"></div>
<div style="left:1681px;top:450px;width:1px;height:26px;background:#434343;"></div>
<div style="left:1988px;top:450px;width:1px;height:842px;background:#303030;"></div>
<div style="left:1988px;top:450px;width:1px;height:26px;background:#434343;"></div>
<div style="left:2172px;top:450px;width:1px;height:842px;background:#303030;"></div>
<div style="left:2172px;top:450px;width:1px;height:26px;background:#434343;"></div>
<div style="left:2356px;top:450px;width:1px;height:842px;background:#303030;"></div>
<div style="left:2356px;top:450px;width:1px;height:26px;background:#4a4a4a;"></div>
<div style="left:2432px;top:477px;width:1px;height:815px;background:#303030;"></div>
<div class="t" style="top:458.04px;font-size:12px;line-height:12px;color:#d2d2d2;left:700.2px;transform:scaleX(0.9776);transform-origin:0 0;">Name</div>
<div class="t" style="top:458.04px;font-size:12px;line-height:12px;color:#d2d2d2;left:1315.8px;transform:scaleX(0.9462);transform-origin:0 0;">Status</div>
<div class="t" style="top:458.04px;font-size:12px;line-height:12px;color:#d2d2d2;left:1500.6px;transform:scaleX(0.9763);transform-origin:0 0;">Type</div>
<div class="t" style="top:458.04px;font-size:12px;line-height:12px;color:#d2d2d2;left:1686px;transform:scaleX(1.0544);transform-origin:0 0;">Initiator</div>
<div class="t" style="top:458.04px;font-size:12px;line-height:12px;color:#d2d2d2;left:1993px;transform:scaleX(0.8996);transform-origin:0 0;">Size</div>
<div class="t" style="top:458.04px;font-size:12px;line-height:12px;color:#d2d2d2;left:2177px;transform:scaleX(0.9758);transform-origin:0 0;">Time</div>
<div class="t" style="top:458.04px;font-size:12px;line-height:12px;color:#d2d2d2;left:2361px;transform:scaleX(1.0105);transform-origin:0 0;">Waterfall</div>
<svg style="left:702.6px;top:481.2px;" width="11" height="13" viewBox="0 0 11 13"><rect x="0.3" y="0.3" width="10.4" height="12.4" fill="#f4f4f4"/><rect x="2" y="2.4" width="6.4" height="8.4" fill="#8fa8a0"/><rect x="2" y="2.4" width="3" height="4" fill="#5d7d78"/></svg>
<div class="t" style="top:482.14px;font-size:12px;line-height:12px;color:#dedede;left:718.8px;transform:scaleX(0.9671);transform-origin:0 0;">3aeec87ad33541ebae3d5427ea9016a5.jpg</div>
<div class="t" style="top:482.14px;font-size:12px;line-height:12px;color:#dedede;left:1315.8px;transform:scaleX(0.9885);transform-origin:0 0;">304</div>
<div class="t" style="top:482.14px;font-size:12px;line-height:12px;color:#dedede;left:1500.6px;transform:scaleX(1.0579);transform-origin:0 0;">jpeg</div>
<div class="t" style="top:482.14px;font-size:12px;line-height:12px;color:#dedede;left:1686px;transform:scaleX(0.9420);transform-origin:0 0;"><u>:53179/__pageframe__/__dev__/WAWebview.js:1</u></div>
<div class="t" style="top:482.14px;font-size:12px;line-height:12px;color:#dedede;right:335.80px;">312 B</div>
<div class="t" style="top:482.14px;font-size:12px;line-height:12px;color:#dedede;right:152.20px;">10 ms</div>
<div style="left:702.8px;top:502.2px;width:10.4px;height:12.8px;background:#ffffff;"></div>
<div class="t" style="top:503.14px;font-size:12px;line-height:12px;color:#dedede;left:718.8px;transform:scaleX(0.9979);transform-origin:0 0;">login?username=10001&amp;password=123456</div>
<div class="t" style="top:503.14px;font-size:12px;line-height:12px;color:#dedede;left:1315.8px;transform:scaleX(0.9885);transform-origin:0 0;">200</div>
<div class="t" style="top:503.14px;font-size:12px;line-height:12px;color:#dedede;left:1500.6px;transform:scaleX(1.0317);transform-origin:0 0;">xhr</div>
<div class="t" style="top:503.14px;font-size:12px;line-height:12px;color:#dedede;left:1686px;transform:scaleX(0.9833);transform-origin:0 0;"><u>VM1117 asdebug.js:1</u></div>
<div class="t" style="top:503.14px;font-size:12px;line-height:12px;color:#dedede;right:335.80px;">511 B</div>
<div class="t" style="top:503.14px;font-size:12px;line-height:12px;color:#dedede;right:152.20px;">7 ms</div>
<div style="left:702.8px;top:523.2px;width:10.4px;height:12.8px;background:#ffffff;"></div>
<div class="t" style="top:524.14px;font-size:12px;line-height:12px;color:#dedede;left:718.8px;transform:scaleX(0.9462);transform-origin:0 0;">session</div>
<div class="t" style="top:524.14px;font-size:12px;line-height:12px;color:#dedede;left:1315.8px;transform:scaleX(0.9885);transform-origin:0 0;">200</div>
<div class="t" style="top:524.14px;font-size:12px;line-height:12px;color:#dedede;left:1500.6px;transform:scaleX(1.0317);transform-origin:0 0;">xhr</div>
<div class="t" style="top:524.14px;font-size:12px;line-height:12px;color:#dedede;left:1686px;transform:scaleX(0.9833);transform-origin:0 0;"><u>VM1117 asdebug.js:1</u></div>
<div class="t" style="top:524.14px;font-size:12px;line-height:12px;color:#dedede;right:335.80px;">767 B</div>
<div class="t" style="top:524.14px;font-size:12px;line-height:12px;color:#dedede;right:152.20px;">4 ms</div>
<div style="left:702.8px;top:544.2px;width:10.4px;height:12.8px;background:#ffffff;"></div>
<div class="t" style="top:545.14px;font-size:12px;line-height:12px;color:#dedede;left:718.8px;transform:scaleX(0.9462);transform-origin:0 0;">session</div>
<div class="t" style="top:545.14px;font-size:12px;line-height:12px;color:#8a8a8a;left:1315.8px;transform:scaleX(1.0059);transform-origin:0 0;">(pending)</div>
<div class="t" style="top:545.14px;font-size:12px;line-height:12px;color:#dedede;left:1500.6px;transform:scaleX(1.0317);transform-origin:0 0;">xhr</div>
<div class="t" style="top:545.14px;font-size:12px;line-height:12px;color:#dedede;left:1686px;transform:scaleX(0.9833);transform-origin:0 0;"><u>VM1117 asdebug.js:1</u></div>
<div class="t" style="top:545.14px;font-size:12px;line-height:12px;color:#dedede;right:335.80px;">0 B</div>
<div class="t" style="top:545.14px;font-size:12px;line-height:12px;color:#8a8a8a;right:152.20px;">Pending</div>
<div style="left:2356px;top:477px;width:1px;height:815px;background:#484848;"></div>
<div style="left:2357.8px;top:477px;width:3.6px;height:815px;background:linear-gradient(90deg,rgba(125,40,46,0.25),rgba(125,40,46,0.55) 45%,rgba(125,40,46,0.5) 60%,rgba(125,40,46,0.15));"></div>
<div style="left:2360.8px;top:481.8px;width:2.4px;height:11.2px;background:#4fa6dc;"></div>
</div></body></html>
